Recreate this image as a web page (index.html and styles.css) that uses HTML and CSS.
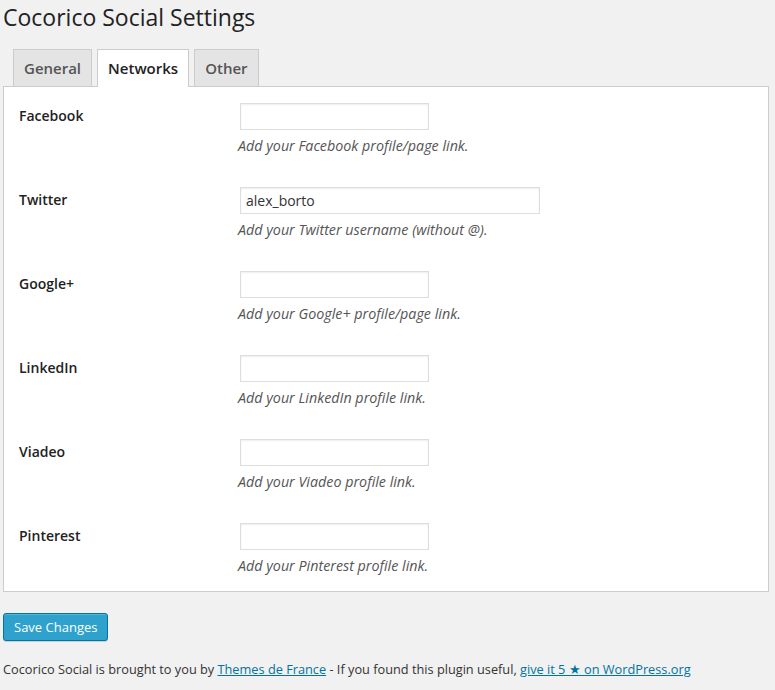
FILE: index.html
```html
<!DOCTYPE html>
<html>
<head>
<meta charset="utf-8">
<link rel="stylesheet" href="styles.css">
</head>
<body>
<div class="wrap">
  <h2 class="title">Cocorico Social Settings</h2>
  <nav class="tabs">
    <span class="tab">General</span>
    <span class="tab active">Networks</span>
    <span class="tab">Other</span>
  </nav>
  <div class="panel">
    <div class="row">
      <div class="label">Facebook</div>
      <div class="field"><input class="input" type="text"><p class="desc">Add your Facebook profile/page link.</p></div>
    </div>
    <div class="row">
      <div class="label">Twitter</div>
      <div class="field"><input class="input wide" type="text" value="alex_borto"><p class="desc">Add your Twitter username (without @).</p></div>
    </div>
    <div class="row">
      <div class="label">Google+</div>
      <div class="field"><input class="input" type="text"><p class="desc">Add your Google+ profile/page link.</p></div>
    </div>
    <div class="row">
      <div class="label">LinkedIn</div>
      <div class="field"><input class="input" type="text"><p class="desc">Add your LinkedIn profile link.</p></div>
    </div>
    <div class="row">
      <div class="label">Viadeo</div>
      <div class="field"><input class="input" type="text"><p class="desc">Add your Viadeo profile link.</p></div>
    </div>
    <div class="row">
      <div class="label">Pinterest</div>
      <div class="field"><input class="input" type="text"><p class="desc">Add your Pinterest profile link.</p></div>
    </div>
  </div>
  <div class="actions"><button class="btn">Save Changes</button></div>
  <p class="footer">Cocorico Social is brought to you by <a href="#">Themes de France</a> - If you found this plugin useful, <a href="#">give it 5 ★ on WordPress.org</a></p>
</div>
</body>
</html>
```
FILE: styles.css
```css
html, body {
  margin: 0;
  padding: 0;
  background: #f1f1f1;
  font-family: "Open Sans", "Liberation Sans", sans-serif;
  color: #444;
}
.wrap {
  padding: 0 6px 0 3px;
}
.title {
  margin: 0;
  padding: 3px 0 0 0;
  font-size: 23px;
  line-height: 29px;
  font-weight: 400;
  color: #222;
}
.tabs {
  display: flex;
  gap: 5px;
  padding-left: 10px;
  margin-top: 17px;
}
.tab {
  display: block;
  padding: 6px 10px;
  line-height: 24px;
  font-size: 15px;
  font-weight: 600;
  color: #555;
  background: #e4e4e4;
  border: 1px solid #ccc;
  border-bottom: none;
}
.tab.active {
  background: #fff;
  color: #222;
  margin-bottom: -1px;
  position: relative;
  z-index: 1;
  padding-bottom: 7px;
}
.panel {
  background: #fff;
  border: 1px solid #ccc;
  padding: 0 15px;
}
.row {
  display: flex;
  height: 84px;
  box-sizing: border-box;
  padding-top: 16px;
}
.label {
  width: 221px;
  flex: none;
  font-size: 14px;
  font-weight: 600;
  color: #222;
  line-height: 20px;
  padding-top: 3px;
}
.field {
  flex: 1;
}
.input {
  display: block;
  box-sizing: border-box;
  width: 189px;
  height: 27px;
  margin: 0;
  padding: 3px 5px;
  font-family: "Open Sans", "Liberation Sans", sans-serif;
  font-size: 14px;
  color: #333;
  background: #fff;
  border: 1px solid #ddd;
  box-shadow: inset 0 1px 2px rgba(0,0,0,.07);
  outline: none;
}
.input.wide {
  width: 300px;
}
.desc {
  margin: 6px 0 0 -2px;
  font-size: 14.3px;
  line-height: 20px;
  font-style: italic;
  color: #555;
}
.actions {
  padding-top: 21px;
}
.btn {
  display: block;
  height: 28px;
  padding: 0 10px 1px;
  font-family: "Open Sans", "Liberation Sans", sans-serif;
  font-size: 13px;
  line-height: 26px;
  color: #fff;
  background: #2ea2cc;
  border: 1px solid #0074a2;
  border-radius: 3px;
  box-shadow: inset 0 1px 0 rgba(120,200,230,.5), 0 1px 0 rgba(0,0,0,.15);
}
.footer {
  margin: 18px 0 0;
  font-size: 12.75px;
  line-height: 20px;
  color: #333;
}
.footer a {
  color: #0074a2;
}
```
